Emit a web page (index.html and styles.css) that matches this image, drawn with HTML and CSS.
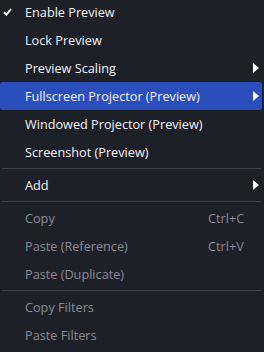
FILE: index.html
```html
<!DOCTYPE html>
<html>

<head>
    <meta charset="utf-8" />
    <title>Preview context menu</title>
    <link rel="stylesheet" href="styles.css">
</head>

<body>
    <div class="menu">
        <div class="item">
            <span class="check">
                <svg width="9" height="8" viewBox="0 0 9 8"><path d="M1 4.2 L3.4 6.6 L8 1.2" fill="none" stroke="#fff" stroke-width="2"/></svg>
            </span>
            <span class="label">Enable Preview</span>
        </div>
        <div class="item"><span class="label">Lock Preview</span></div>
        <div class="item sub"><span class="label">Preview Scaling</span><span class="arrow"></span></div>
        <div class="item sub active"><span class="label">Fullscreen Projector (Preview)</span><span class="arrow"></span></div>
        <div class="item"><span class="label">Windowed Projector (Preview)</span></div>
        <div class="item"><span class="label">Screenshot (Preview)</span></div>
        <div class="sep"></div>
        <div class="item sub"><span class="label">Add</span><span class="arrow"></span></div>
        <div class="sep"></div>
        <div class="item off"><span class="label">Copy</span><span class="key">Ctrl+C</span></div>
        <div class="item off"><span class="label">Paste (Reference)</span><span class="key">Ctrl+V</span></div>
        <div class="item off"><span class="label">Paste (Duplicate)</span></div>
        <div class="sep"></div>
        <div class="item off"><span class="label">Copy Filters</span></div>
        <div class="item off"><span class="label">Paste Filters</span></div>
    </div>
</body>

</html>
```

FILE: styles.css
```css
body {
    margin: 0;
    background-color: #1e2029;
    font-family: "Open Sans", "DejaVu Sans", sans-serif;
    font-size: 12.7px;
    color: #f2f3f5;
    overflow: hidden;
}

.menu {
    margin-top: -2px;
    height: 354px;
    background-color: #1e2029;
    border-bottom: 1px solid #14151b;
}

.item {
    display: flex;
    align-items: center;
    height: 28px;
    padding-left: 25px;
    padding-right: 3px;
    margin-right: 2px;
    border-radius: 3px;
    position: relative;
}

.item.active {
    background-color: #2b4ebd;
}

.check {
    position: absolute;
    left: 3px;
    top: 10px;
    width: 9px;
    height: 8px;
}

.check svg {
    display: block;
}

.label {
    flex: 1;
    white-space: nowrap;
}

.arrow {
    width: 0;
    height: 0;
    border-top: 5px solid transparent;
    border-bottom: 5px solid transparent;
    border-left: 6px solid #ffffff;
}

.item.off {
    color: #898b93;
}

.key {
    width: 51px;
    white-space: nowrap;
}

.sep {
    height: 1px;
    margin: 2px 3px 2px 2px;
    background-color: #3d404b;
}
```
